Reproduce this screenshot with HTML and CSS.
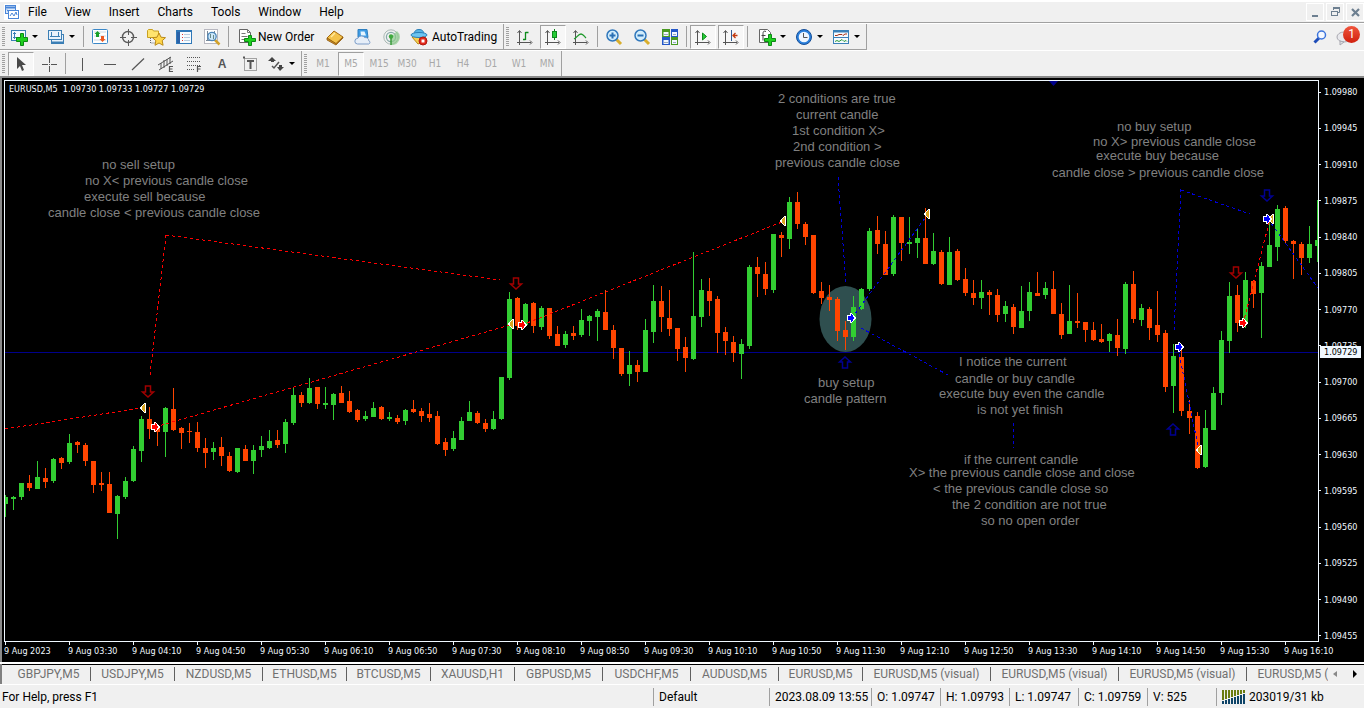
FILE: index.html
```html
<!DOCTYPE html>
<html lang="en">
<head>
<meta charset="utf-8">
<title>EURUSD,M5</title>
<link rel="stylesheet" href="styles.css">
</head>
<body>
<header class="menubar">
  <svg class="app-icon" width="16" height="16" viewBox="0 0 16 16" fill="none" stroke="#4a86d8"><rect x="1.500" y="1.500" width="10" height="8" fill="#dceafc"/><path d="M1 3.500H12" stroke-width="2"/><rect x="4.500" y="6.500" width="10" height="8" fill="#fff"/><path d="M3 5.500l1 2M6 12l2-3 2 3 2-4 1 3"/></svg>
  <nav class="menu">
    <button>File</button><button>View</button><button>Insert</button><button>Charts</button><button>Tools</button><button>Window</button><button>Help</button>
  </nav>
  <div class="win-controls">
    <button aria-label="Minimize"><svg width="14" height="14" viewBox="0 0 14 14"><path d="M4 10h6v2H4z" fill="#6d7f90"/></svg></button>
    <button aria-label="Restore"><svg width="14" height="14" viewBox="0 0 14 14" fill="none" stroke="#6d7f90"><path d="M5.500 5V3.500h6v4H10"/><path d="M5 3h7" stroke-width="2"/><rect x="3.500" y="6.500" width="6" height="4"/><path d="M3 6.500h7"/></svg></button>
    <button aria-label="Close"><svg width="14" height="14" viewBox="0 0 14 14"><path d="M4 4l7 7M11 4l-7 7" stroke="#6d7f90" stroke-width="2.200"/></svg></button>
  </div>
</header>

<div class="toolbar">
  <div class="group">
    <span class="grip"></span>
    <button class="drop" aria-label="New chart"><svg width="18" height="18" viewBox="0 0 18 18"><rect x="1.500" y="2.500" width="14" height="10" fill="#f4faff" stroke="#3b7fb5"/><path d="M4.500 4v7M3 5.500h3M3 9.500h4" stroke="#3b7fb5"/><path d="M10.500 5.500h3v4h4v4h-4v4h-3v-4h-4v-4h4z" fill="#1fd01f" stroke="#0a8a14"/></svg><i class="caret"></i></button>
    <button class="drop" aria-label="Profiles"><svg width="18" height="18" viewBox="0 0 18 18" fill="#e8f2fc" stroke="#3b7fb5"><rect x="4.500" y="6.500" width="12" height="9"/><path d="M5 14.500h11" stroke-width="2"/><rect x="1.500" y="2.500" width="13" height="9"/><path d="M4.500 4v5M11.500 4v5M3 8.500h10"/></svg><i class="caret"></i></button>
    <span class="sep"></span>
    <button class="tool" aria-label="Market Watch"><svg width="18" height="18" viewBox="0 0 18 18"><rect x="1.500" y="1.500" width="15" height="14" rx="1" fill="#fff" stroke="#3b88c8"/><path d="M3 4h12M3 8h12M3 12h12" stroke="#ccd8e4"/><path d="M6.500 3l3 3H8v3H5V6H3.500z" fill="#18a028"/><path d="M11.500 14l3-3H13V8h-3v3H8.500z" fill="#ee5a22"/></svg></button>
    <button class="tool" aria-label="Data Window"><svg width="18" height="18" viewBox="0 0 18 18" fill="none" stroke="#5a5a5a"><circle cx="9" cy="9" r="5.500" stroke-width="1.400"/><path d="M9.500 1v6M9.500 12v6M1 9.500h6M12 9.500h6"/></svg></button>
    <button class="tool" aria-label="Navigator"><svg width="20" height="18" viewBox="0 0 20 18"><path d="M1.500 9.500v-7l1-1h4l1 1.500h5v6.500z" fill="#ffe46e" stroke="#c8a020"/><path d="M4.500 10v5h6" fill="none" stroke="#666" stroke-dasharray="1 1"/><path d="M13 5l2 4.200 4.500.5-3.300 3 .9 4.600-4.100-2.300L9 17.300l.8-4.600-3.300-3 4.500-.5z" fill="#ffd64a" stroke="#b98a18"/></svg></button>
    <button class="tool" aria-label="Terminal"><svg width="18" height="18" viewBox="0 0 18 18"><rect x="1.500" y="2.500" width="15" height="13" fill="#f8fcff" stroke="#2f78b8"/><path d="M2 3.500h14" stroke="#2f78b8"/><path d="M3.500 4v11" stroke="#2a62a8" stroke-width="3"/><path d="M7 6.500h1M7 9.500h1M7 12.500h1" stroke="#d33"/><path d="M9 6.500h6M9 9.500h6M9 12.500h6" stroke="#b8cde0"/></svg></button>
    <button class="tool" aria-label="Strategy Tester"><svg width="18" height="18" viewBox="0 0 18 18"><rect x="1.500" y="1.500" width="13" height="14" fill="#fff" stroke="#b8b8c0"/><path d="M4.500 3v10M11.500 3v9M3 12.500h9" stroke="#789"/><path d="M12 12l4.500 4.500" stroke="#d3a32c" stroke-width="2.500"/><circle cx="9" cy="8.500" r="4.200" fill="#cde8fa" stroke="#4d86b8" stroke-width="1.300"/><path d="M7.500 6v4M10.500 7v4" stroke="#688"/></svg></button>
    <span class="sep"></span>
    <button class="labelled"><svg width="18" height="18" viewBox="0 0 18 18"><path d="M1.500 1.500h8l3 3v10h-11z" fill="#fff" stroke="#666"/><path d="M9.500 1.500v3h3M3.500 5.500h4M3.500 8.500h6M3.500 11.500h4" stroke="#777" fill="none"/><path d="M10.500 7.500h3v3h4v3h-4v4h-3v-4h-4v-3h4z" fill="#1fd01f" stroke="#0a8a14"/></svg>New Order</button>
    <button class="tool" aria-label="MetaEditor"><svg width="18" height="18" viewBox="0 0 18 18"><path d="M1 10l7-7 9 6-7 7z" fill="#f3c24a" stroke="#a46a12"/><path d="M1 10v2l9 5 7-7V9l-7 6.500z" fill="#c98c22" stroke="#8f5a10" stroke-width=".8"/><path d="M5 9l4-4" stroke="#ffe9a0" stroke-width="1.500"/></svg></button>
    <button class="tool" aria-label="Virtual Hosting"><svg width="18" height="18" viewBox="0 0 18 18"><path d="M4 1.500h9l1 8H4z" fill="#3f9ce4" stroke="#2f7fc0"/><path d="M6.500 3.500h4l1.500 4H7z" fill="#e6f5ff"/><path d="M3.500 16a2.800 2.800 0 0 1 .3-5.600 4 4 0 0 1 7-.8 3.300 3.300 0 0 1 4 3.200 1.700 1.700 0 0 1 0 3.200z" fill="#e6eef8" stroke="#7c9cc8"/></svg></button>
    <button class="tool" aria-label="Signals"><svg width="18" height="18" viewBox="0 0 18 18" fill="none"><circle cx="9" cy="9" r="7.200" stroke="#a9b9b4"/><circle cx="9" cy="9" r="4.600" stroke="#86aaa8" stroke-width="1.200"/><path d="M9 9v8a8 8 0 0 0 6-14z" fill="#8ccb8c" opacity=".7"/><circle cx="9" cy="8.500" r="2.200" fill="#3fa93f"/><path d="M9 10v7" stroke="#3a9d3a" stroke-width="1.500"/></svg></button>
    <button class="labelled auto"><svg width="18" height="18" viewBox="0 0 18 18"><path d="M2 9l6 7 7-3V8z" fill="#f6cf52" stroke="#b88a18"/><path d="M4 7c0-4 2-5.500 5-5.500s5 1.500 5 5.500" fill="#58b4e4" stroke="#2a80b8"/><ellipse cx="9" cy="7" rx="8" ry="2.500" fill="#6cc4f0" stroke="#2a80b8"/><circle cx="13" cy="13" r="4" fill="#e3291a" stroke="#b01a10"/><path d="M11.500 11.500h3v3h-3z" fill="#fff"/></svg>AutoTrading</button>
  </div>
  <div class="group">
    <span class="grip"></span>
    <button class="tool" aria-label="Bar chart"><svg width="18" height="18" viewBox="0 0 18 18" fill="none" stroke="#555"><path d="M3.500 3v14M1 14.500h14M1.500 5l2-2.500 2 2.500M14 12.500l2 2-2 2"/><path d="M9.500 4v8M9.500 4.500h3M7 11.500h2.500" stroke="#0d8a1c" stroke-width="1.300"/></svg></button>
    <button class="tool pressed" aria-label="Candlesticks"><svg width="18" height="18" viewBox="0 0 18 18" fill="none" stroke="#555"><path d="M3.500 3v14M1 14.500h14M1.500 5l2-2.500 2 2.500M14 12.500l2 2-2 2"/><path d="M10.500 1v11" stroke="#0d8a1c"/><rect x="8.500" y="3.500" width="4" height="6" fill="#26cc36" stroke="#0d8a1c"/></svg></button>
    <button class="tool" aria-label="Line chart"><svg width="18" height="18" viewBox="0 0 18 18" fill="none" stroke="#555"><path d="M3.500 3v14M1 14.500h14M1.500 5l2-2.500 2 2.500M14 12.500l2 2-2 2"/><path d="M2 11c3-1 4-5 7-5 2 0 3 2 5 4" stroke="#1f9a2c" stroke-width="1.300"/></svg></button>
    <span class="sep"></span>
    <button class="tool" aria-label="Zoom in"><svg width="18" height="18" viewBox="0 0 18 18"><path d="M11 11l5 5" stroke="#d9ae2c" stroke-width="3"/><circle cx="7.500" cy="7.500" r="5.500" fill="#d2edfc" stroke="#3178bc" stroke-width="1.500"/><path d="M4.500 7.500h6M7.500 4.500v6" stroke="#2a70b4" stroke-width="2"/></svg></button>
    <button class="tool" aria-label="Zoom out"><svg width="18" height="18" viewBox="0 0 18 18"><path d="M11 11l5 5" stroke="#d9ae2c" stroke-width="3"/><circle cx="7.500" cy="7.500" r="5.500" fill="#d2edfc" stroke="#3178bc" stroke-width="1.500"/><path d="M4.500 7.500h6" stroke="#2a70b4" stroke-width="2"/></svg></button>
    <button class="tool" aria-label="Tile windows"><svg width="18" height="18" viewBox="0 0 18 18"><path d="M1 1h8v8H1zM10 9h7v8h-7z" fill="#4a9a22"/><path d="M10 1h7v8h-7zM1 9h8v8H1z" fill="#2458c8"/><path d="M2.500 4h5v4h-5zM11 4h5v4h-5zM2.500 12h5v4h-5zM11 12h5v4h-5z" fill="#f2f8ff"/><path d="M3 6.500h4M12 6.500h3M3 14.500h4M12 14.500h3" stroke="#9ab"/></svg></button>
    <span class="sep"></span>
    <button class="tool pressed" aria-label="Auto scroll"><svg width="18" height="18" viewBox="0 0 18 18" fill="none" stroke="#555"><path d="M3.500 3v14M1 14.500h14M1.500 5l2-2.500 2 2.500M14 12.500l2 2-2 2"/><path d="M8.500 5v7l4-3.500z" fill="#26cc36" stroke="#0d8a1c"/></svg></button>
    <button class="tool pressed" aria-label="Chart shift"><svg width="18" height="18" viewBox="0 0 18 18" fill="none" stroke="#555"><path d="M3.500 3v14M1 14.500h14M1.500 5l2-2.500 2 2.500M14 12.500l2 2-2 2"/><path d="M9.500 2v11" stroke="#335c94"/><path d="M10.500 7.500h5M13.500 5l-2.500 2.500 2.500 2.500" stroke="#c33a10" stroke-width="1.300"/></svg></button>
    <span class="sep"></span>
    <div class="menus">
    <button class="drop" aria-label="Indicators"><svg width="18" height="18" viewBox="0 0 18 18"><path d="M1.500 1.500h8l3 3v10h-11z" fill="#fff" stroke="#666"/><path d="M8 3.500c-2-1-3 0-3 2v7M3.500 7.500h4" stroke="#444" fill="none"/><path d="M10.500 6.500h3v4h4v3h-4v4h-3v-4h-4v-3h4z" fill="#1fd01f" stroke="#0a8a14"/></svg><i class="caret"></i></button>
    <button class="drop" aria-label="Periods"><svg width="18" height="18" viewBox="0 0 18 18"><circle cx="9" cy="9" r="7.500" fill="#2a7fdc" stroke="#164f98"/><circle cx="9" cy="9" r="5.300" fill="#eef6ff"/><path d="M8.500 5v4.500h4" fill="none" stroke="#555"/></svg><i class="caret"></i></button>
    <button class="drop" aria-label="Templates"><svg width="18" height="18" viewBox="0 0 18 18" fill="none"><rect x="1.500" y="2.500" width="15" height="13" fill="#f6fbff" stroke="#3b80b8"/><path d="M2 3.500h14" stroke="#3b80b8" stroke-width="2"/><path d="M2 9.500h14" stroke="#3b80b8"/><path d="M3 7.500h2l2-1h3l1 1 2-1.500h2" stroke="#a83218"/><path d="M3 13.500l2-1 2 1 3-2 2 2 2-1 1 1" stroke="#2a9a3c"/></svg><i class="caret"></i></button>
    </div>
  </div>
  <div class="corner">
    <button aria-label="Search"><svg width="16" height="16" viewBox="0 0 16 16"><path d="M7 9l-4.500 4.500" stroke="#1d4cb8" stroke-width="3"/><circle cx="9.500" cy="6" r="4" fill="#f4f8ff" stroke="#3c74dc" stroke-width="1.500"/></svg></button>
    <button class="chat" aria-label="Notifications"><svg width="20" height="18" viewBox="0 0 20 18"><ellipse cx="8" cy="9" rx="7" ry="5" fill="#e8e8ec" stroke="#a8a8b0"/><path d="M4 13v4l4-3z" fill="#e0e0e4" stroke="#a8a8b0"/></svg><span class="badge">1</span></button>
  </div>
</div>

<div class="toolbar second">
  <div class="group">
    <span class="grip"></span>
    <button class="tool pressed" aria-label="Cursor"><svg width="18" height="18" viewBox="0 0 18 18"><path d="M5 2v12l3-3 2 5 2-1-2-5h4z" fill="#4a4a4a"/></svg></button>
    <button class="tool" aria-label="Crosshair"><svg width="18" height="18" viewBox="0 0 18 18" stroke="#555"><path d="M9.500 2v6M9.500 11v6M2 9.500h6M11 9.500h6M9 9.500h1"/></svg></button>
    <span class="sep"></span>
    <button class="tool" aria-label="Vertical line"><svg width="18" height="18" viewBox="0 0 18 18"><path d="M9.500 3v13" stroke="#555"/></svg></button>
    <button class="tool" aria-label="Horizontal line"><svg width="18" height="18" viewBox="0 0 18 18"><path d="M3 9.500h12" stroke="#555"/></svg></button>
    <button class="tool" aria-label="Trendline"><svg width="18" height="18" viewBox="0 0 18 18"><path d="M3 15L15 3.500" stroke="#555" stroke-width="1.200"/></svg></button>
    <button class="tool" aria-label="Equidistant channel"><svg width="18" height="18" viewBox="0 0 18 18" fill="none" stroke="#555"><path d="M1 10L14 2M2 15L16 6M4 8v6M7 5v8M10 4v7M13 2v7"/><path d="M16 11.500h-3.500v5H16M12.500 14h3" stroke-width="1.200"/></svg></button>
    <button class="tool" aria-label="Fibonacci retracement"><svg width="18" height="18" viewBox="0 0 18 18" fill="none" stroke="#555"><path d="M2 2.500h14M2 6.500h14M2 10.500h14M2 14.500h8" stroke-dasharray="1 1"/><path d="M12.500 17v-5.500H16M12.500 14h3" stroke-width="1.200"/></svg></button>
    <button class="tool letter" aria-label="Text">A</button>
    <button class="tool" aria-label="Text label"><svg width="18" height="18" viewBox="0 0 18 18" fill="none" stroke="#555"><rect x="3.500" y="3.500" width="12" height="12" stroke-dasharray="1 1"/><path d="M2 2.500h2M6 6h7M9.500 6v8" stroke-width="2"/></svg></button>
    <button class="drop" aria-label="Arrows"><svg width="18" height="18" viewBox="0 0 18 18"><path d="M5 2l4 4H7v1H4V6H1zM12 10h3v2h2l-4 4-3-4h2z" fill="#444"/><path d="M5 11l2 2 5-6" fill="none" stroke="#555" stroke-width="1.500"/></svg><i class="caret"></i></button>
  </div>
  <div class="group periods">
    <span class="grip"></span>
    <button class="tool">M1</button><button class="tool pressed">M5</button><button class="tool">M15</button><button class="tool">M30</button><button class="tool">H1</button><button class="tool">H4</button><button class="tool">D1</button><button class="tool">W1</button><button class="tool">MN</button>
  </div>
</div>

<main class="chart">
  <div class="plot">
    <svg class="canvas" width="100%" height="100%">
      <defs>
        <path id="entry" d="M-3.500-2.500h3v-2h1l4 4.500-4 4.500h-1v-2h-3z" stroke="#fff" shape-rendering="crispEdges"/>
        <path id="exit" d="M2.500-4.500v9h-1l-4-4.500 4-4.500z" fill="#daa520" stroke="#fff" shape-rendering="crispEdges"/>
        <path id="signal" d="M-2.500-5h5v6h3l-5.500 5-5.500-5h3z" fill="none" stroke-width="1.500"/>
      </defs>
      <g transform="translate(-5 -81)">
        <path d="M1049 81h9l-4.500 5z" fill="#00008b"/>
        <ellipse cx="845.500" cy="319" rx="26" ry="33" fill="#2f4f4f"/>
        <path d="M5 352.500H4000" stroke="#00008b"/>
        <path class="bull" id="bull"/>
        <path class="bear" id="bear"/>
        <g class="trend sell">
          <path d="M5 429L141 408"/><path d="M155 427L510 325"/><path d="M522 325L782 222"/><path d="M166 235L150 375"/><path d="M166 235L500 280"/><path d="M1243 324L1270 219"/>
        </g>
        <g class="trend buy">
          <path d="M838 177L846 284"/><path d="M852 318L928 214"/><path d="M861 328L948 375"/><path d="M1181 189L1174 330"/><path d="M1181 190L1250 214"/><path d="M1013.500 423V448"/><path d="M1178 348L1199 451"/><path d="M1268 219L1318 288"/>
        </g>
        <g stroke="#a00000">
          <use href="#signal" x="148" y="391"/><use href="#signal" x="516" y="283"/><use href="#signal" x="1236" y="272"/>
        </g>
        <g stroke="#000090">
          <use href="#signal" x="1267" y="195"/>
          <use href="#signal" transform="translate(845 363) rotate(180)"/><use href="#signal" transform="translate(1173 430) rotate(180)"/>
        </g>
        <use href="#exit" x="143" y="408"/><use href="#exit" x="511" y="324"/><use href="#exit" x="783" y="221"/><use href="#exit" x="927" y="214"/><use href="#exit" x="1199" y="450"/><use href="#exit" x="1271" y="219"/>
        <g fill="#f00"><use href="#entry" x="155" y="427"/><use href="#entry" x="522" y="325"/><use href="#entry" x="1243" y="323"/></g>
        <g fill="#00f"><use href="#entry" x="851" y="318"/><use href="#entry" x="1179" y="347"/><use href="#entry" x="1267" y="219"/></g>
        <g class="notes">
          <text x="102" y="169">no sell setup</text>
          <text x="85" y="185">no X&lt; previous candle close</text>
          <text x="84" y="201">execute sell because</text>
          <text x="48" y="217">candle close &lt; previous candle close</text>
          <text x="778" y="103">2 conditions are true</text>
          <text x="796" y="119">current candle</text>
          <text x="792" y="135">1st condition X&gt;</text>
          <text x="793" y="151">2nd condition &gt;</text>
          <text x="775" y="167">previous candle close</text>
          <text x="1117" y="131">no buy setup</text>
          <text x="1093" y="146">no X&gt; previous candle close</text>
          <text x="1096" y="160">execute buy because</text>
          <text x="1052" y="177">candle close &gt; previous candle close</text>
          <text x="818" y="387">buy setup</text>
          <text x="804" y="403">candle pattern</text>
          <text x="959" y="366">I notice the current</text>
          <text x="955" y="383">candle or buy candle</text>
          <text x="939" y="398">execute buy even the candle</text>
          <text x="977" y="414">is not yet finish</text>
          <text x="964" y="464">if the current candle</text>
          <text x="909" y="477">X&gt; the previous candle close and close</text>
          <text x="933" y="493">&lt; the previous candle close so</text>
          <text x="952" y="509">the 2 condition are not true</text>
          <text x="981" y="525">so no open order</text>
        </g>
      </g>
    </svg>
    <p class="quote">EURUSD,M5&nbsp; 1.09730 1.09733 1.09727 1.09729</p>
  </div>
  <div class="prices">
    <span>1.09980</span><span>1.09945</span><span>1.09910</span><span>1.09875</span><span>1.09840</span><span>1.09805</span><span>1.09770</span><span>1.09735</span><span>1.09700</span><span>1.09665</span><span>1.09630</span><span>1.09595</span><span>1.09560</span><span>1.09525</span><span>1.09490</span><span>1.09455</span>
    <b class="current">1.09729</b>
  </div>
  <div class="times">
    <span>9 Aug 2023</span><span>9 Aug 03:30</span><span>9 Aug 04:10</span><span>9 Aug 04:50</span><span>9 Aug 05:30</span><span>9 Aug 06:10</span><span>9 Aug 06:50</span><span>9 Aug 07:30</span><span>9 Aug 08:10</span><span>9 Aug 08:50</span><span>9 Aug 09:30</span><span>9 Aug 10:10</span><span>9 Aug 10:50</span><span>9 Aug 11:30</span><span>9 Aug 12:10</span><span>9 Aug 12:50</span><span>9 Aug 13:30</span><span>9 Aug 14:10</span><span>9 Aug 14:50</span><span>9 Aug 15:30</span><span>9 Aug 16:10</span>
  </div>
</main>

<nav class="tabs">
  <div class="tab-list">
    <button>GBPJPY,M5</button><button>USDJPY,M5</button><button class="wide">NZDUSD,M5</button><button>ETHUSD,M5</button><button>BTCUSD,M5</button><button>XAUUSD,H1</button><button class="wide">GBPUSD,M5</button><button class="wide">USDCHF,M5</button><button class="wide">AUDUSD,M5</button><button>EURUSD,M5</button><button class="visual">EURUSD,M5 (visual)</button><button class="visual">EURUSD,M5 (visual)</button><button class="visual">EURUSD,M5 (visual)</button><button class="visual">EURUSD,M5 (visual)</button>
  </div>
  <div class="tab-scroll">
    <button aria-label="Scroll left"><svg width="6" height="8" viewBox="0 0 6 8"><path d="M5 1v6L1 4z" fill="#888"/></svg></button>
    <button aria-label="Scroll right"><svg width="6" height="8" viewBox="0 0 6 8"><path d="M1 0v8l4-4z" fill="#000"/></svg></button>
  </div>
</nav>

<footer class="status">
  <span class="message">For Help, press F1</span>
  <span class="profile">Default</span>
  <span class="date">2023.08.09 13:55</span>
  <span class="value">O: 1.09747</span>
  <span class="value">H: 1.09793</span>
  <span class="value">L: 1.09747</span>
  <span class="value">C: 1.09759</span>
  <span class="value">V: 525</span>
  <span class="traffic"><svg width="24" height="14" viewBox="0 0 24 14" fill="none" stroke-width="2"><path d="M1 0v10M4 0v9M7 0v8M10 0v7M13 0v6M16 0v5M19 0v4M22 0v3" stroke="#6b7d10"/><path d="M1 11v3M4 10v4M7 9v5M10 8v6M13 7v7M16 6v8M19 5v9M22 4v10" stroke="#0e4468"/></svg>203019/31 kb</span>
</footer>
<script src="chart.js"></script>
</body>
</html>
```
FILE: styles.css
```css
* { box-sizing: border-box; }

body {
  margin: 0;
  height: 100vh;
  display: flex;
  flex-direction: column;
  overflow: hidden;
  background: #f0f0f0;
  color: #000;
  font: 12px/16px Roboto, "Noto Sans", sans-serif;
}

button {
  margin: 0;
  padding: 0;
  border: 0;
  background: none;
  color: inherit;
  font: inherit;
  white-space: nowrap;
}

svg { display: block; flex: none; }

.menubar {
  display: flex;
  align-items: center;
  height: 23px;
  padding-left: 4px;
  border-top: 2px solid #fff;
  border-bottom: 1px solid #a0a0a0;
}
.app-icon { background: #fff; }
.menu { display: flex; flex: 1; gap: 18px; padding-left: 8px; }
.win-controls { display: flex; gap: 2px; }
.win-controls button {
  display: flex;
  align-items: center;
  justify-content: center;
  width: 18px;
  height: 18px;
  border: 1px solid #fff;
}

.toolbar {
  display: flex;
  height: 27px;
  border-top: 1px solid #fff;
}
.second { height: 26px; }
.group {
  display: flex;
  align-items: center;
  border-right: 1px solid #a0a0a0;
  border-bottom: 1px solid #a0a0a0;
}
.second .group { border-bottom: 0; }
.grip {
  width: 3px;
  height: 19px;
  margin: 0 2px;
  background: repeating-linear-gradient(#a0a0a0 0 1px, #f0f0f0 1px 2px);
}
.sep { width: 1px; height: 21px; margin: 0 2px; background: #a0a0a0; }
.tool, .drop, .labelled {
  display: flex;
  align-items: center;
  height: 24px;
}
.tool { width: 28px; justify-content: center; }
.drop { width: 37px; padding-left: 3px; gap: 4px; }
.menus { display: flex; padding-left: 5px; }
.labelled { width: 90px; padding-left: 7px; gap: 2px; }
.auto { width: 98px; padding-left: 5px; gap: 4px; }
.caret { border: 3px solid transparent; border-top-color: #000; border-bottom: 0; }
.pressed {
  width: 26px;
  margin: 0 1px;
  border: 1px solid #fff;
  border-top-color: #a0a0a0;
  border-left-color: #a0a0a0;
  background: #f7f7f7;
}
.letter { color: #555; font: bold 12px/16px "Liberation Sans", sans-serif; }
.periods { color: #a8a8a8; font: 10px/14px "DejaVu Sans Condensed", "DejaVu Sans", sans-serif; }

.corner {
  display: flex;
  flex: 1;
  justify-content: flex-end;
  align-items: center;
  gap: 8px;
  padding-right: 8px;
}
.chat { position: relative; }
.badge {
  position: absolute;
  top: -2px;
  right: -4px;
  width: 17px;
  height: 17px;
  border-radius: 50%;
  background: linear-gradient(#f0553c, #d0200e);
  color: #fff;
  line-height: 17px;
  text-align: center;
}

.chart {
  flex: 1;
  min-height: 0;
  display: grid;
  grid-template: minmax(0, 1fr) 20px / minmax(0, 1fr) 45px;
  padding: 2px 0 0 2px;
  border: 2px solid #8a8a8a;
  border-right: 0;
  border-bottom: 0;
  background: #000;
  color: #f0f8ff;
  font: 9px/12px "DejaVu Sans Condensed", "DejaVu Sans", sans-serif;
}
.plot { position: relative; border: 1px solid #f0f8ff; }
.canvas { overflow: hidden; }
.bull { fill: #32cd32; }
.bear { fill: #ff4500; }
.trend { fill: none; stroke-dasharray: 3 3; shape-rendering: crispEdges; }
.sell { stroke: #f00; }
.buy { stroke: #0000d8; }
.notes { fill: #808080; font: 13px "Liberation Sans", Arial, sans-serif; }
.quote { position: absolute; top: 2px; left: 4px; margin: 0; }
.prices {
  position: relative;
  display: flex;
  flex-direction: column;
  justify-content: space-between;
  padding-top: 6px;
}
.prices span { display: flex; align-items: center; gap: 3px; }
.prices span::before { content: ""; width: 2px; height: 1px; background: #f0f8ff; }
.current {
  position: absolute;
  top: 266px;
  left: 1px;
  width: 41px;
  padding-left: 4px;
  background: #f0f8ff;
  color: #000;
  font-weight: normal;
}
.times { grid-column: 1 / -1; display: flex; overflow: hidden; }
.times span { flex: none; width: 64px; white-space: nowrap; }
.times span::before {
  content: "";
  display: block;
  width: 1px;
  height: 3px;
  margin-left: 1px;
  background: #f0f8ff;
}

.tabs {
  display: flex;
  height: 23px;
  border-top: 2px solid #fff;
  border-bottom: 1px solid #fff;
  box-shadow: inset 0 1px #000;
  color: #707070;
}
.tab-list {
  display: flex;
  flex: 1;
  min-width: 0;
  align-items: center;
  overflow: hidden;
  padding-left: 5px;
  border-left: 2px solid #808080;
}
.tab-list button { flex: none; width: 84px; height: 14px; line-height: 14px; border-right: 1px solid #606060; }
.tab-list .wide { width: 88px; }
.tab-list .visual { width: 128px; }
.tab-scroll { display: flex; align-items: center; gap: 14px; padding: 0 6px 0 4px; }

.status { display: flex; align-items: center; height: 23px; }
.status span { height: 18px; padding-left: 5px; border-left: 1px solid #a0a0a0; line-height: 18px; white-space: nowrap; }
.status .message { flex: 1; padding-left: 2px; border: 0; }
.status .profile { width: 116px; }
.status .date { width: 102px; }
.status .value { width: 69px; }
.status .traffic { display: flex; align-items: center; gap: 3px; width: 148px; }
```
FILE: chart.js
```js
// One row per candle, 8px apart: direction, wick top, wick bottom, body top, body bottom.
const rows = `
G495,517,497,504 G496,510,497,499 G483,500,483,497 R475,491,483,488 G461,489,477,489
R468,488,478,482 G458,483,459,481 R457,469,458,463 G434,464,443,462 R441,453,442,445
R443,466,445,461 R461,493,461,485 R472,491,483,485 R472,513,484,513 G495,539,496,514
G477,499,481,497 G446,482,449,481 G416,462,419,451 R407,439,419,429 R426,446,427,432
G407,457,408,432 R388,431,409,430 R427,449,428,433 R423,443,431,432 R422,452,432,448
R438,468,448,453 G442,460,448,452 R437,466,447,456 R452,472,456,471 G448,473,448,472
R445,461,449,461 G445,474,450,461 G436,457,446,450 G430,449,441,448 R430,448,440,445
G419,453,422,444 G388,425,395,423 R392,407,395,403 G378,404,388,403 R387,409,387,404
G387,409,403,405 G393,420,394,405 R386,403,393,403 R391,413,401,412 R409,422,410,420
G411,421,416,419 G402,417,408,417 R406,420,407,419 G412,421,417,419 R415,424,418,422
G409,425,410,421 R400,413,409,412 R408,422,411,416 R403,422,414,418 R411,445,416,444
R438,456,442,450 G431,451,438,449 G417,440,421,440 G401,421,412,421 R411,424,413,423
R419,432,423,429 G411,430,419,429 G377,420,377,419 G292,380,299,378 R297,330,298,326
G303,326,304,325 R302,333,303,326 G306,330,308,327 R308,339,308,336 R326,346,334,346
G331,348,334,345 R326,340,333,336 G309,337,320,335 G315,336,316,321 G309,341,311,317
R290,330,312,330 R325,359,330,348 R348,376,348,374 G351,386,365,374 R360,382,365,372
G319,372,330,372 G285,343,301,332 R286,332,301,317 R290,336,318,329 R328,361,328,349
R337,372,347,358 G252,360,316,359 G279,327,290,317 R278,316,291,301 R296,353,299,333
R327,355,332,341 R336,362,342,353 G339,379,344,354 G265,349,267,346 R257,297,267,274
R262,295,274,289 G234,293,234,290 R232,257,235,238 G197,249,202,239 R192,229,202,224
R222,245,224,237 R235,294,235,293 R282,304,291,298 R285,311,297,300 R297,341,299,331
R321,350,330,337 G296,341,307,337 G288,310,289,309 G228,291,231,289 R216,254,230,244
R231,275,244,275 G215,276,217,274 R217,261,217,243 G217,254,242,244 G228,258,238,243
R208,264,238,264 G233,265,251,264 R250,285,252,284 G237,285,252,285 R249,281,251,280
R268,296,279,293 R280,305,293,298 G280,309,292,298 R290,315,292,295 R289,322,295,315
G301,322,306,314 R304,334,307,327 G286,328,311,328 G282,321,292,311 R272,296,293,296
G282,299,288,295 R271,314,289,314 R303,339,314,335 G285,334,321,334 R293,328,321,323
R322,342,322,330 R322,341,330,340 R324,343,339,342 G333,352,334,341 R319,356,335,348
G282,354,284,349 R271,323,284,319 G304,326,308,320 R307,340,309,328 R291,342,325,335
R330,392,333,387 G344,413,356,386 R350,416,357,411 R400,434,411,418 R412,469,416,468
G410,468,428,467 G387,430,393,430 G331,405,340,393 G282,353,296,341 R285,332,295,323
G272,328,280,324 R280,308,281,294 G262,338,266,293 G220,267,245,267 G205,261,209,247
R206,244,208,241 R240,279,241,244 R242,275,244,258 G226,263,244,258 G200,262,240,246
`;

const paths = { G: "", R: "" };
rows.trim().split(/\s+/).forEach((row, i) => {
  const [high, low, top, bottom] = row.slice(1).split(",").map(Number);
  const x = 5 + i * 8;
  paths[row[0]] +=
    `M${x} ${high}h1V${low}h-1z` +
    `M${x - 2} ${top}h5V${bottom}h-5z`;
});
document.getElementById("bull").setAttribute("d", paths.G);
document.getElementById("bear").setAttribute("d", paths.R);
```
